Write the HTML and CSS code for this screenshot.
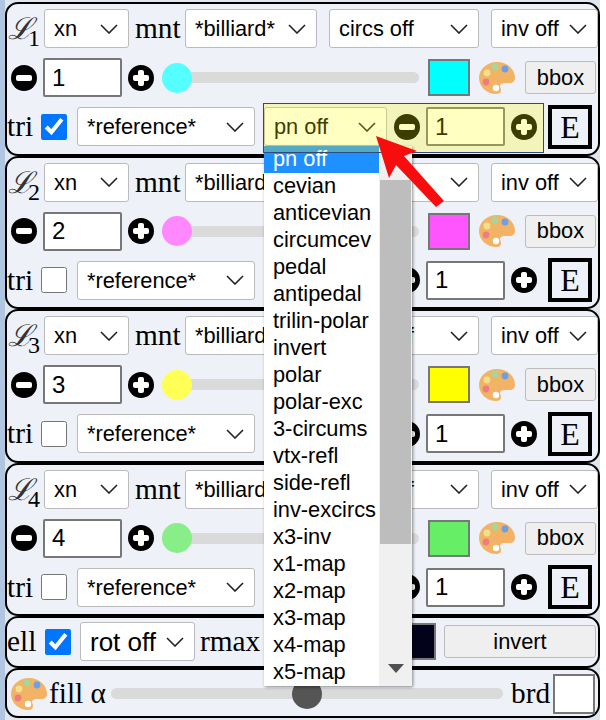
FILE: index.html
```html
<!DOCTYPE html>
<html lang="en">
<head>
  <meta charset="UTF-8">
  <title>Loci controls</title>
  <link rel="stylesheet" href="styles.css">
</head>
<body>
  <svg class="defs" width="0" height="0">
    <symbol id="palette" viewBox="0 0 38 38">
      <path d="M19 3C9 3 1 10 1 19c0 9 8 16 17 16 3 0 5-1 5-4 0-2-1-3-1-4 0-2 2-3 4-3h5c4 0 6-2 6-5C37 10 29 3 19 3z" fill="#f2b366"/>
      <circle cx="9" cy="14" r="3.4" fill="#efe08a"/>
      <circle cx="17" cy="8" r="3.4" fill="#a5d69a"/>
      <circle cx="27" cy="10" r="3.4" fill="#6d9fe6"/>
      <circle cx="8" cy="23" r="3.4" fill="#ef7d7d"/>
      <circle cx="18" cy="29" r="3.2" fill="#fff"/>
    </symbol>
  </svg>

  <main class="page">
    <section class="panel">
      <div class="row">
        <span class="locus">ℒ<sub>1</sub></span>
        <select class="sel sel-type"><option>xn</option></select>
        <span class="lbl lbl-mnt">mnt</span>
        <select class="sel sel-mnt"><option>*billiard*</option></select>
        <select class="sel sel-circs"><option>circs off</option></select>
        <select class="sel sel-inv"><option>inv off</option></select>
      </div>
      <div class="row">
        <button class="step minus"></button>
        <input class="num" type="text" value="1">
        <button class="step plus"></button>
        <input class="slider thumb-cyan" type="range" min="0" max="100" value="0">
        <span class="swatch cyan"></span>
        <svg class="palette"><use href="#palette"/></svg>
        <button class="btn bbox">bbox</button>
      </div>
      <div class="row">
        <span class="lbl lbl-tri">tri</span>
        <input class="check" type="checkbox" checked>
        <select class="sel sel-ref"><option>*reference*</option></select>
        <select class="sel sel-pn"><option>pn off</option></select>
        <button class="step minus step-pn"></button>
        <input class="num" type="text" value="1">
        <button class="step plus"></button>
        <button class="env">E</button>
      </div>
    </section>

    <section class="panel">
      <div class="row">
        <span class="locus">ℒ<sub>2</sub></span>
        <select class="sel sel-type"><option>xn</option></select>
        <span class="lbl lbl-mnt">mnt</span>
        <select class="sel sel-mnt"><option>*billiard*</option></select>
        <select class="sel sel-circs"><option>circs off</option></select>
        <select class="sel sel-inv"><option>inv off</option></select>
      </div>
      <div class="row">
        <button class="step minus"></button>
        <input class="num" type="text" value="2">
        <button class="step plus"></button>
        <input class="slider thumb-magenta" type="range" min="0" max="100" value="0">
        <span class="swatch magenta"></span>
        <svg class="palette"><use href="#palette"/></svg>
        <button class="btn bbox">bbox</button>
      </div>
      <div class="row">
        <span class="lbl lbl-tri">tri</span>
        <input class="check" type="checkbox">
        <select class="sel sel-ref"><option>*reference*</option></select>
        <select class="sel sel-pn"><option>pn off</option></select>
        <button class="step minus step-pn"></button>
        <input class="num" type="text" value="1">
        <button class="step plus"></button>
        <button class="env">E</button>
      </div>
    </section>

    <section class="panel">
      <div class="row">
        <span class="locus">ℒ<sub>3</sub></span>
        <select class="sel sel-type"><option>xn</option></select>
        <span class="lbl lbl-mnt">mnt</span>
        <select class="sel sel-mnt"><option>*billiard*</option></select>
        <select class="sel sel-circs"><option>circs off</option></select>
        <select class="sel sel-inv"><option>inv off</option></select>
      </div>
      <div class="row">
        <button class="step minus"></button>
        <input class="num" type="text" value="3">
        <button class="step plus"></button>
        <input class="slider thumb-yellow" type="range" min="0" max="100" value="0">
        <span class="swatch yellow"></span>
        <svg class="palette"><use href="#palette"/></svg>
        <button class="btn bbox">bbox</button>
      </div>
      <div class="row">
        <span class="lbl lbl-tri">tri</span>
        <input class="check" type="checkbox">
        <select class="sel sel-ref"><option>*reference*</option></select>
        <select class="sel sel-pn"><option>pn off</option></select>
        <button class="step minus step-pn"></button>
        <input class="num" type="text" value="1">
        <button class="step plus"></button>
        <button class="env">E</button>
      </div>
    </section>

    <section class="panel">
      <div class="row">
        <span class="locus">ℒ<sub>4</sub></span>
        <select class="sel sel-type"><option>xn</option></select>
        <span class="lbl lbl-mnt">mnt</span>
        <select class="sel sel-mnt"><option>*billiard*</option></select>
        <select class="sel sel-circs"><option>circs off</option></select>
        <select class="sel sel-inv"><option>inv off</option></select>
      </div>
      <div class="row">
        <button class="step minus"></button>
        <input class="num" type="text" value="4">
        <button class="step plus"></button>
        <input class="slider thumb-green" type="range" min="0" max="100" value="0">
        <span class="swatch green"></span>
        <svg class="palette"><use href="#palette"/></svg>
        <button class="btn bbox">bbox</button>
      </div>
      <div class="row">
        <span class="lbl lbl-tri">tri</span>
        <input class="check" type="checkbox">
        <select class="sel sel-ref"><option>*reference*</option></select>
        <select class="sel sel-pn"><option>pn off</option></select>
        <button class="step minus step-pn"></button>
        <input class="num" type="text" value="1">
        <button class="step plus"></button>
        <button class="env">E</button>
      </div>
    </section>

    <section class="panel panel-ell">
      <div class="row">
        <span class="lbl lbl-ell">ell</span>
        <input class="check" type="checkbox" checked>
        <select class="sel sel-rot"><option>rot off</option></select>
        <span class="lbl lbl-rmax">rmax</span>
        <span class="swatch navy"></span>
        <button class="btn invert">invert</button>
      </div>
    </section>

    <section class="panel panel-fill">
      <div class="row">
        <svg class="palette palette-fill"><use href="#palette"/></svg>
        <span class="lbl lbl-fill">fill α</span>
        <input class="slider slider-fill" type="range" min="0" max="100" value="50">
        <span class="lbl lbl-brd">brd</span>
        <span class="swatch white"></span>
      </div>
    </section>
  </main>

  <!-- open dropdown of the first pn select -->
  <div class="popup">
    <ul class="options">
      <li class="selected">pn off</li>
      <li>cevian</li>
      <li>anticevian</li>
      <li>circumcev</li>
      <li>pedal</li>
      <li>antipedal</li>
      <li>trilin-polar</li>
      <li>invert</li>
      <li>polar</li>
      <li>polar-exc</li>
      <li>3-circums</li>
      <li>vtx-refl</li>
      <li>side-refl</li>
      <li>inv-excircs</li>
      <li>x3-inv</li>
      <li>x1-map</li>
      <li>x2-map</li>
      <li>x3-map</li>
      <li>x4-map</li>
      <li>x5-map</li>
    </ul>
    <div class="scrollbar">
      <span class="scroll-up"></span>
      <span class="scroll-thumb"></span>
      <span class="scroll-down"></span>
    </div>
  </div>

  <div class="highlight"></div>

  <svg class="arrow" width="606" height="720" viewBox="0 0 606 720">
    <polygon points="376,136 417,151 404,156 444,201 436,207 396,165 389,178" fill="#f70d0d"/>
  </svg>
</body>
</html>
```

FILE: styles.css
```css
html, body {
  margin: 0;
  height: 720px;
  overflow: hidden;
  background: #fff;
}
body {
  font-family: "Liberation Sans", Arial, sans-serif;
  font-size: 21.8px;
  color: #000;
}
.defs {
  display: block;
  height: 0;
}
.page {
  box-sizing: border-box;
  width: 600px;
  height: 720px;
  padding-top: 2px;
  border-left: 5px solid #afc5e0;
  background: #dfe6f0;
}

/* panels */
.panel {
  box-sizing: border-box;
  height: 153.5px;
  padding-top: 5px;
  display: flex;
  flex-direction: column;
  gap: 10px;
  border: 2px solid #000;
  border-radius: 13px;
  background: #eef1f8;
}
.panel-ell {
  height: 52px;
  padding-top: 4px;
}
.panel-fill {
  height: 50px;
  padding-top: 4px;
}
.row {
  height: 39px;
  display: flex;
  align-items: center;
}

/* labels */
.lbl, .locus {
  flex: none;
  font-family: "Liberation Serif", "Times New Roman", serif;
  font-size: 29.33px;
  line-height: 39px;
  white-space: nowrap;
}
.locus {
  width: 37px;
  padding-left: 1px;
  box-sizing: border-box;
  font-family: "DejaVu Serif", serif;
  font-style: italic;
  font-size: 30px;
  letter-spacing: -5px;
  color: #333;
}
.locus sub {
  font-family: "Liberation Serif", serif;
  font-style: normal;
  font-size: 24px;
  letter-spacing: 0;
  line-height: 0;
  color: #000;
}
.lbl-mnt { margin-left: 6px; width: 50px; }
.lbl-tri { width: 34px; }
.lbl-ell { width: 38px; }
.lbl-rmax { margin-left: 5px; }
.lbl-fill { margin-left: 1px; width: 62px; }
.lbl-brd { margin-left: 8px; }

/* checkboxes */
.check {
  width: 26px;
  height: 26px;
  margin: 0;
  flex: none;
}

/* selects */
.sel {
  box-sizing: border-box;
  height: 39px;
  padding: 0 0 0 9px;
  flex: none;
  appearance: none;
  border: 1.5px solid #bbb;
  border-radius: 3px;
  font: inherit;
  color: #000;
  background: #fff url("data:image/svg+xml,%3Csvg xmlns='http://www.w3.org/2000/svg' width='18' height='10'%3E%3Cpath d='M1 1l8 8 8-8' fill='none' stroke='%23222' stroke-width='1.6'/%3E%3C/svg%3E") no-repeat right 10px center;
}
.sel-type { width: 85px; }
.sel-mnt { width: 132px; }
.sel-circs { width: 150px; margin-left: 12px; }
.sel-inv { width: 107px; margin-left: 12px; }
.sel-ref { width: 178px; margin-left: 10px; }
.sel-pn { width: 123px; margin-left: 9px; }
.sel-rot { width: 115px; margin-left: 9px; font-size: 26px; }

/* steppers */
.step {
  position: relative;
  width: 26px;
  height: 26px;
  padding: 0;
  flex: none;
  border: none;
  border-radius: 50%;
  background: #000;
}
.minus { margin-left: 4px; }
.plus { margin-left: 6px; }
.step-pn { margin-left: 7px; }
.minus::before, .plus::before, .plus::after {
  content: "";
  position: absolute;
  left: 5px;
  top: 10px;
  width: 16px;
  height: 6px;
  border-radius: 2px;
  background: #fff;
}
.plus::after {
  left: 10px;
  top: 5px;
  width: 6px;
  height: 16px;
}
.num {
  box-sizing: border-box;
  width: 79px;
  height: 39px;
  margin-left: 6px;
  padding: 0 0 0 7px;
  flex: none;
  border: 2.5px solid #777;
  border-radius: 2px;
  font: inherit;
  font-size: 24px;
  background: #fff;
}

/* sliders */
.slider {
  width: 257px;
  height: 30px;
  margin: 0 0 0 8px;
  flex: none;
  appearance: none;
  background: transparent;
}
.slider::-webkit-slider-runnable-track {
  height: 11px;
  border-radius: 6px;
  background: #dadada;
}
.slider::-webkit-slider-thumb {
  appearance: none;
  width: 30px;
  height: 30px;
  margin-top: -9.5px;
  border-radius: 50%;
  background: var(--thumb);
}
.thumb-cyan { --thumb: #55ffff; }
.thumb-magenta { --thumb: #ff88ff; }
.thumb-yellow { --thumb: #ffff55; }
.thumb-green { --thumb: #88ee88; }
.slider-fill {
  --thumb: #555;
  width: 392px;
  margin-left: 0;
}

/* colour swatches */
.swatch {
  box-sizing: border-box;
  width: 42px;
  height: 37px;
  margin-left: 9px;
  flex: none;
  border: 2.5px solid #777;
}
.cyan { background: #0ff; }
.magenta { background: #ff55ff; }
.yellow { background: #ff0; }
.green { background: #66ee66; }
.navy {
  margin-left: auto;
  background: #02021a;
}
.white {
  height: 40px;
  margin-left: 3px;
  background: #fff;
}
.palette {
  width: 38px;
  height: 38px;
  margin-left: 8px;
  flex: none;
}
.palette-fill { margin-left: 3px; }

/* buttons */
.btn {
  box-sizing: border-box;
  height: 33px;
  flex: none;
  border: 1.5px solid #bbb;
  border-radius: 3px;
  font: inherit;
  color: #000;
  background: #efefef;
}
.bbox {
  width: 71px;
  margin-left: 9px;
}
.invert {
  width: 152px;
  margin: 0 2px 0 8px;
}
.env {
  box-sizing: border-box;
  width: 44px;
  height: 44px;
  margin-left: 11px;
  padding: 0;
  flex: none;
  border: 4.5px solid #000;
  font-family: "Liberation Serif", serif;
  font-size: 32px;
  color: #000;
  background: #eef1f8;
}

/* dropdown list over the panels */
.popup {
  position: absolute;
  left: 264px;
  top: 146px;
  z-index: 1;
  width: 148px;
  height: 540px;
  display: flex;
  background: #fff;
  box-shadow: 1px 1px 3px rgba(0, 0, 0, 0.45);
}
.options {
  flex: 1;
  margin: 0;
  padding: 0;
  list-style: none;
}
.options li {
  height: 27px;
  padding-left: 9px;
  line-height: 26px;
}
.options .selected {
  color: #fff;
  background: #1e90ff;
}
.scrollbar {
  position: relative;
  width: 33px;
  background: #f0f0f0;
}
.scroll-up {
  position: absolute;
  left: 9px;
  top: 10px;
  border: solid transparent;
  border-width: 0 8px 9px;
  border-bottom-color: #a0a0a0;
}
.scroll-thumb {
  position: absolute;
  left: 1px;
  right: 1px;
  top: 34px;
  height: 364px;
  background: #bdbdbd;
}
.scroll-down {
  position: absolute;
  left: 9px;
  bottom: 13px;
  border: solid transparent;
  border-width: 9px 8px 0;
  border-top-color: #505050;
}

/* annotation layer */
.highlight {
  box-sizing: border-box;
  position: absolute;
  left: 263px;
  top: 103px;
  z-index: 2;
  width: 281px;
  height: 50px;
  border: 1px solid #2c4a80;
  background: rgba(255, 255, 0, 0.24);
}
.arrow {
  position: absolute;
  left: 0;
  top: 0;
  z-index: 3;
  pointer-events: none;
}
```
